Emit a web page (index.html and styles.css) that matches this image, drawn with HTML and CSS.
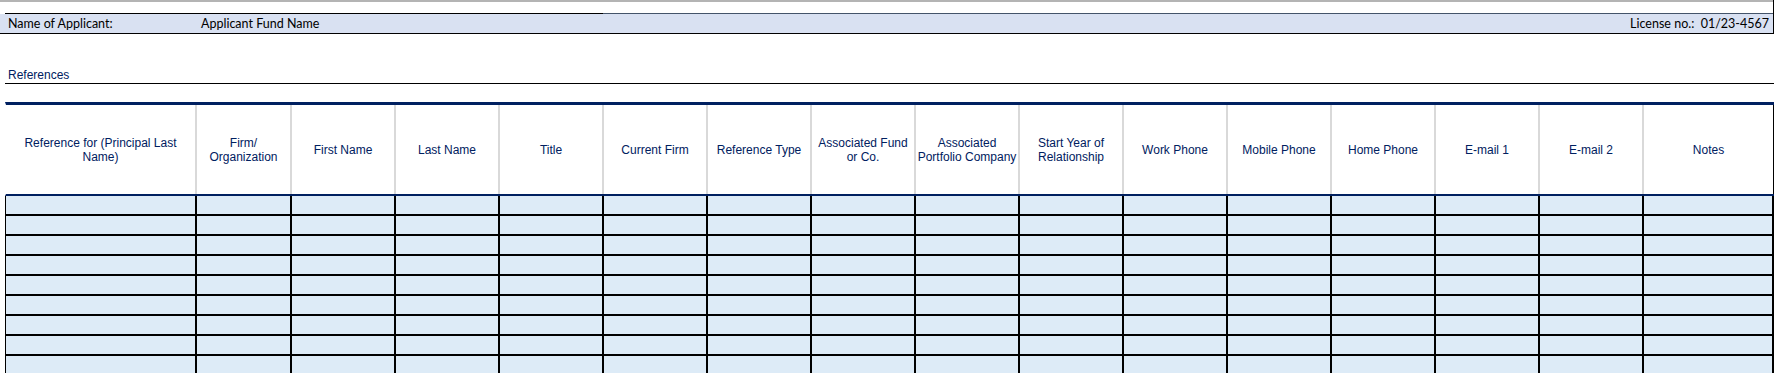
FILE: index.html
```html
<!DOCTYPE html>
<html lang="en">
<head>
<meta charset="utf-8">
<title>References</title>
<link rel="stylesheet" href="styles.css">
</head>
<body>
<div class="sheet">
  <div class="top-block">
    <div class="gridline-row"></div>
    <div class="band-rule"></div>
    <div class="band">
      <span class="band-label">Name of Applicant:</span>
      <span class="band-value">Applicant Fund Name</span>
      <span class="band-license">License no.:&nbsp; 01/23-4567</span>
    </div>
  </div>

  <div class="section-title"><span>References</span></div>

  <div class="ref-table">
    <div class="head-row">
      <div class="hcell">Reference for (Principal Last<br>Name)</div>
      <div class="hcell">Firm/<br>Organization</div>
      <div class="hcell">First Name</div>
      <div class="hcell">Last Name</div>
      <div class="hcell">Title</div>
      <div class="hcell">Current Firm</div>
      <div class="hcell">Reference Type</div>
      <div class="hcell">Associated Fund<br>or Co.</div>
      <div class="hcell">Associated<br>Portfolio Company</div>
      <div class="hcell">Start Year of<br>Relationship</div>
      <div class="hcell">Work Phone</div>
      <div class="hcell">Mobile Phone</div>
      <div class="hcell">Home Phone</div>
      <div class="hcell">E-mail 1</div>
      <div class="hcell">E-mail 2</div>
      <div class="hcell hcell-last">Notes</div>
    </div>
    <div class="data-row"><div class="dcell"></div><div class="dcell"></div><div class="dcell"></div><div class="dcell"></div><div class="dcell"></div><div class="dcell"></div><div class="dcell"></div><div class="dcell"></div><div class="dcell"></div><div class="dcell"></div><div class="dcell"></div><div class="dcell"></div><div class="dcell"></div><div class="dcell"></div><div class="dcell"></div><div class="dcell"></div></div>
    <div class="data-row"><div class="dcell"></div><div class="dcell"></div><div class="dcell"></div><div class="dcell"></div><div class="dcell"></div><div class="dcell"></div><div class="dcell"></div><div class="dcell"></div><div class="dcell"></div><div class="dcell"></div><div class="dcell"></div><div class="dcell"></div><div class="dcell"></div><div class="dcell"></div><div class="dcell"></div><div class="dcell"></div></div>
    <div class="data-row"><div class="dcell"></div><div class="dcell"></div><div class="dcell"></div><div class="dcell"></div><div class="dcell"></div><div class="dcell"></div><div class="dcell"></div><div class="dcell"></div><div class="dcell"></div><div class="dcell"></div><div class="dcell"></div><div class="dcell"></div><div class="dcell"></div><div class="dcell"></div><div class="dcell"></div><div class="dcell"></div></div>
    <div class="data-row"><div class="dcell"></div><div class="dcell"></div><div class="dcell"></div><div class="dcell"></div><div class="dcell"></div><div class="dcell"></div><div class="dcell"></div><div class="dcell"></div><div class="dcell"></div><div class="dcell"></div><div class="dcell"></div><div class="dcell"></div><div class="dcell"></div><div class="dcell"></div><div class="dcell"></div><div class="dcell"></div></div>
    <div class="data-row"><div class="dcell"></div><div class="dcell"></div><div class="dcell"></div><div class="dcell"></div><div class="dcell"></div><div class="dcell"></div><div class="dcell"></div><div class="dcell"></div><div class="dcell"></div><div class="dcell"></div><div class="dcell"></div><div class="dcell"></div><div class="dcell"></div><div class="dcell"></div><div class="dcell"></div><div class="dcell"></div></div>
    <div class="data-row"><div class="dcell"></div><div class="dcell"></div><div class="dcell"></div><div class="dcell"></div><div class="dcell"></div><div class="dcell"></div><div class="dcell"></div><div class="dcell"></div><div class="dcell"></div><div class="dcell"></div><div class="dcell"></div><div class="dcell"></div><div class="dcell"></div><div class="dcell"></div><div class="dcell"></div><div class="dcell"></div></div>
    <div class="data-row"><div class="dcell"></div><div class="dcell"></div><div class="dcell"></div><div class="dcell"></div><div class="dcell"></div><div class="dcell"></div><div class="dcell"></div><div class="dcell"></div><div class="dcell"></div><div class="dcell"></div><div class="dcell"></div><div class="dcell"></div><div class="dcell"></div><div class="dcell"></div><div class="dcell"></div><div class="dcell"></div></div>
    <div class="data-row"><div class="dcell"></div><div class="dcell"></div><div class="dcell"></div><div class="dcell"></div><div class="dcell"></div><div class="dcell"></div><div class="dcell"></div><div class="dcell"></div><div class="dcell"></div><div class="dcell"></div><div class="dcell"></div><div class="dcell"></div><div class="dcell"></div><div class="dcell"></div><div class="dcell"></div><div class="dcell"></div></div>
    <div class="data-row data-row-cut"><div class="dcell"></div><div class="dcell"></div><div class="dcell"></div><div class="dcell"></div><div class="dcell"></div><div class="dcell"></div><div class="dcell"></div><div class="dcell"></div><div class="dcell"></div><div class="dcell"></div><div class="dcell"></div><div class="dcell"></div><div class="dcell"></div><div class="dcell"></div><div class="dcell"></div><div class="dcell"></div></div>
  </div>
</div>
</body>
</html>
```

FILE: styles.css
```css
html, body {
  margin: 0;
  padding: 0;
  background: #ffffff;
  overflow: hidden;
}

.sheet {
  width: 1774px;
  font-family: "Liberation Sans", Arial, sans-serif;
}

/* top strip + applicant band */
.top-block {
  width: 1774px;
  box-sizing: border-box;
  border-right: 1px solid #000000;
}

.gridline-row {
  height: 13px;
  box-sizing: border-box;
  border-top: 2px solid #b4b4b4;
}

.band-rule {
  height: 1px;
  margin-left: 5px;
  background: linear-gradient(to right, #000000 598px, #44546a 598px);
}

.band {
  height: 20px;
  box-sizing: border-box;
  border-bottom: 1px solid #000000;
  background: #d9e1f2;
  display: flex;
  align-items: center;
  font-family: Lato, "Open Sans", sans-serif;
  font-size: 12.5px;
  line-height: 19px;
  color: #000000;
}

.band-label {
  margin-left: 8px;
  width: 193px;
}

.band-value {
  flex: 1;
}

.band-license {
  margin-right: 4px;
  white-space: pre;
}

/* section title */
.section-title {
  height: 50px;
  margin-left: 5px;
  box-sizing: border-box;
  border-bottom: 1px solid #000000;
  display: flex;
  align-items: flex-end;
  padding: 0 0 1px 3px;
  font-size: 12px;
  line-height: 14px;
  color: #002060;
}

/* references table */
.ref-table {
  margin: 18px 0 0 5px;
  width: 1769px;
}

.head-row,
.data-row {
  display: grid;
  grid-template-columns: 191px 95px repeat(13, 104px) 130px;
  box-sizing: border-box;
}

.head-row {
  height: 94px;
  border-top: 3px solid #002060;
  border-bottom: 2px solid #002060;
  border-left: 1px solid #ffffff;
}

.hcell {
  box-sizing: border-box;
  border-right: 2px solid #d9d9d9;
  display: flex;
  align-items: center;
  justify-content: center;
  text-align: center;
  white-space: nowrap;
  font-size: 12px;
  line-height: 14px;
  color: #002060;
}

.hcell-last {
  border-right: 1px solid #000000;
}

.data-row {
  height: 20px;
  border-left: 1px solid #000000;
  border-bottom: 2px solid #000000;
}

.data-row-cut {
  height: 17px;
  border-bottom: 0;
}

.dcell {
  box-sizing: border-box;
  background: #ddebf7;
  border-right: 2px solid #000000;
}
```
